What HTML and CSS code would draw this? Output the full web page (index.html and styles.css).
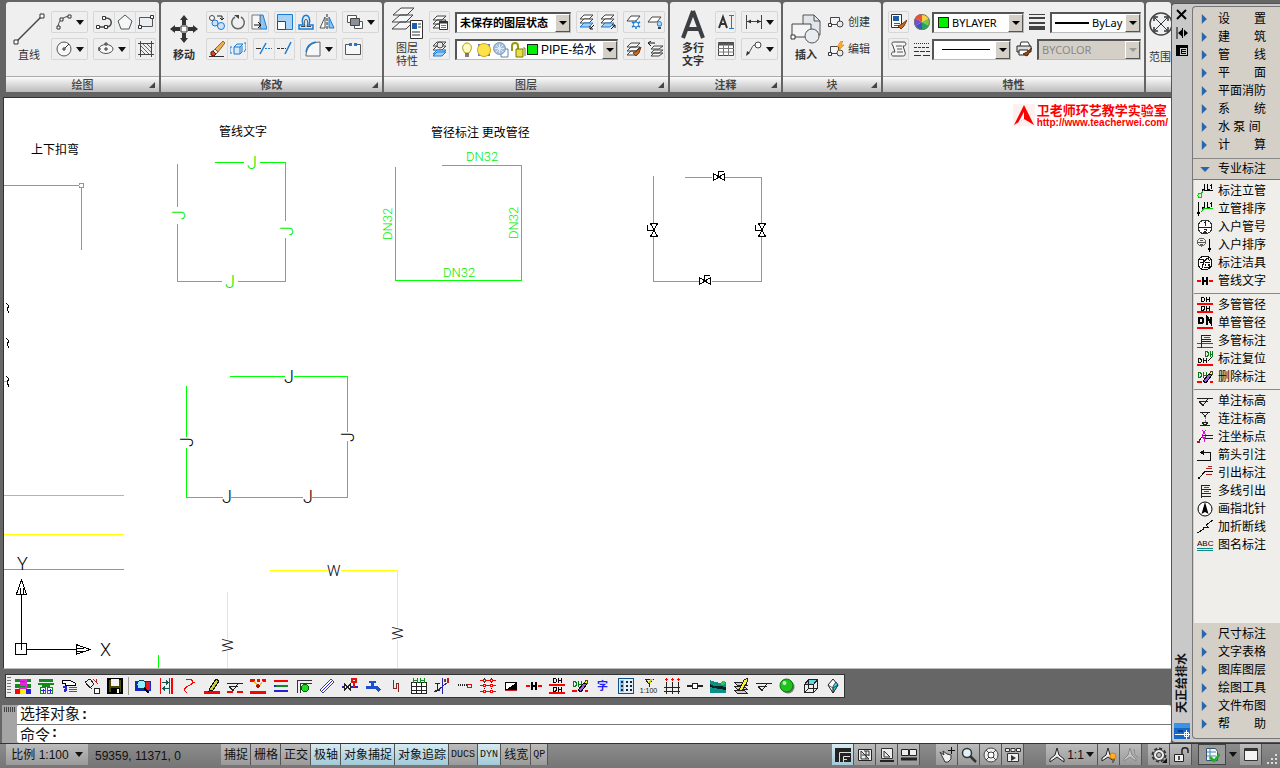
FILE: index.html
```html
<!DOCTYPE html>
<html lang="zh-CN">
<head>
    <meta charset="UTF-8">
    <title>天正给排水</title>
    <link rel="stylesheet" href="styles.css">
</head>
<body>
    <!-- Shared icons -->
    <svg class="symbols" aria-hidden="true">
        <symbol id="layers" viewBox="0 0 16 16"><path d="M5 2h9l-4 4H1zM5 6h9l-4 4H1zM5 10h9l-4 4H1z" fill="#f4f6f8" stroke="#444"/></symbol>
        <symbol id="layers-blue" viewBox="0 0 16 16"><path d="M5 1h9l-4 4H1z" fill="#fff" stroke="#444"/><path d="M5 5h9l-4 4H1z" fill="#fff" stroke="#444"/><path d="M5 9h9l-4 4H1z" fill="#9fd0f5" stroke="#1c7bd0"/></symbol>
        <symbol id="dn-pair" viewBox="0 0 16 16"><path d="M0 7h16M0 15h16" stroke="red" stroke-width="2"/><path d="M4.500 0v5M4.500.5h2l1 1v2l-1 1h-2M9.500 0v5M12.500 0v5M9.500 2.500h3M4.500 8.500v5M4.500 9h2l1 1v2l-1 1h-2M9.500 8.500v5M12.500 8.500v5M9.500 11h3" fill="none" stroke="#000"/></symbol>
        <symbol id="h-line" viewBox="0 0 16 16"><path d="M0 8h4M12 8h4" stroke="red" stroke-width="2"/><path d="M6 4v8M10 4v8M6 8h4" stroke="#000" stroke-width="1.5"/></symbol>
        <symbol id="dn-erase" viewBox="0 0 16 16"><path d="M0 13h5M13 13h3" stroke="red" stroke-width="2"/><path d="M1.500 3v6M1.500 3.500h2l1 2v1l-1 2h-2M6.500 3v6M9.500 3v4M6.500 6h3" fill="none" stroke="#0a7a1a"/><path d="M6 12l6-7 3 1-6 8z" fill="#a060d8" stroke="#000"/><path d="M12 5l2-3 2 1-1 3z" fill="#ff0" stroke="#000" stroke-width=".7"/></symbol>
        <symbol id="level" viewBox="0 0 16 16"><path d="M0 5.500h16M2 8.500h9M2 8.500l4 4 5-7" fill="none" stroke="#222"/></symbol>
        <symbol id="jl" viewBox="0 0 16 16"><path d="M7.500 1v5H5M10.500 1v5h2M13 3l1.500-1.500V6M5 7.500h11" fill="none" stroke="#000"/></symbol>
    </svg>

    <div class="app">
        <div class="workspace">
            <main class="main">
                <!-- Ribbon -->
                <div class="ribbon">
                    <section class="panel">
                        <div class="panel-body">
                            <button class="big"><svg class="icon32" viewBox="0 0 32 32"><path d="M4 28L28 4" stroke="#444" stroke-width="1.5"/><path d="M1 27h4v4H1zM27 1h4v4h-4z" fill="#fff" stroke="#333"/></svg><span>直线</span></button>
                            <div class="rows">
                                <div class="row">
                                    <span class="group"><button class="tool split" aria-label="圆弧"><svg viewBox="0 0 16 16"><path d="M2 14C2 7 6 3 14 2" fill="none" stroke="#444"/><path d="M1 12h3v3H1zM4 4h3v3H4zM12 1h3v3h-3z" fill="#fff" stroke="#333"/></svg><i class="caret"></i></button></span>
                                    <span class="group">
                                        <button class="tool" aria-label="多段线"><svg viewBox="0 0 16 16"><path d="M2 13h8c7 0 7-9 0-9H8" fill="none" stroke="#444" stroke-width="1.500"/><path d="M.5 11.500h3v3h-3zM8.500 11.500h3v3h-3zM6.500 2.500h3v3h-3z" fill="#fff" stroke="#333"/></svg></button>
                                        <button class="tool" aria-label="多边形"><svg viewBox="0 0 16 16"><path d="M8 1l7 6-3 8H4L1 7z" fill="#f5f7f9" stroke="#555"/></svg></button>
                                        <button class="tool" aria-label="矩形"><svg viewBox="0 0 16 16"><path d="M1.500 3.500h13v9h-13z" fill="#e9eef2" stroke="#555"/><path d="M.5 11.500h3v3h-3zM12.500 1.500h3v3h-3z" fill="#fff" stroke="#333"/></svg></button>
                                    </span>
                                </div>
                                <div class="row">
                                    <span class="group"><button class="tool split" aria-label="圆"><svg viewBox="0 0 16 16"><circle cx="8" cy="8" r="7" fill="#f5f7f9" stroke="#555"/><path d="M8 8l5-5" stroke="#333"/><path d="M7 7h2v2H7z" fill="#fff" stroke="#333"/></svg><i class="caret"></i></button></span>
                                    <span class="group"><button class="tool split" aria-label="椭圆"><svg viewBox="0 0 16 16"><ellipse cx="8" cy="8" rx="7" ry="4.5" fill="#f5f7f9" stroke="#555"/><path d="M0 7h2v2H0zM7 7h2v2H7zM7 2h2v2H7z" fill="#fff" stroke="#333"/></svg><i class="caret"></i></button></span>
                                    <span class="group"><button class="tool" aria-label="图案填充"><svg viewBox="0 0 16 16"><path d="M0 2.500h16M0 13.500h16M2.500 0v16M13.500 0v16" stroke="#444"/><path d="M3 5l8 8M3 9l4 4M5 3l8 8M9 3l4 4" stroke="#666"/></svg></button></span>
                                </div>
                            </div>
                        </div>
                        <h2 class="panel-title">绘图<i class="corner"></i></h2>
                    </section>

                    <section class="panel">
                        <div class="panel-body">
                            <button class="big"><svg class="icon32" viewBox="0 0 32 32"><path d="M16 2l4 5h-2v5h-4V7h-2zM16 30l4-5h-2v-5h-4v5h-2zM2 16l5-4v2h5v4H7v2zM30 16l-5-4v2h-5v4h5v2z" fill="#333"/><path d="M13 13h6v6h-6z" fill="#fff" stroke="#333"/></svg><span><b>移动</b></span></button>
                            <div class="rows">
                                <div class="row">
                                    <span class="group">
                                        <button class="tool" aria-label="复制"><svg viewBox="0 0 16 16"><circle cx="3" cy="4" r="2.5" fill="#fff" stroke="#444"/><circle cx="6" cy="9" r="3" fill="#cbe4f8" stroke="#1c7bd0"/><circle cx="12" cy="12" r="3.5" fill="#cbe4f8" stroke="#1c7bd0"/><path d="M8 2h5v4M11 4l2 2 2-2" fill="none" stroke="#222"/></svg></button>
                                        <button class="tool" aria-label="旋转"><svg viewBox="0 0 16 16"><path d="M5 3a6.3 6.3 0 1 0 6 0" fill="none" stroke="#666" stroke-width="1.500"/><path d="M4 1h5v4z" fill="#444"/></svg></button>
                                        <button class="tool" aria-label="拉伸"><svg viewBox="0 0 16 16"><path d="M9 1h3l4 14H9z" fill="#8fc4f0" stroke="#1c7bd0"/><path d="M1 1h8v14H1z" fill="#f6f6f6" stroke="#777"/><path d="M3 11h7M7 8l3 3-3 3" stroke="#111" fill="none"/></svg></button>
                                    </span>
                                    <span class="group">
                                        <button class="tool" aria-label="缩放"><svg viewBox="0 0 16 16"><path d="M.5.500h15v15H.5z" fill="#a9d3f5" stroke="#1c7bd0"/><path d="M.5 7.500h8v8h-8z" fill="#fff" stroke="#444"/></svg></button>
                                        <button class="tool" aria-label="偏移"><svg viewBox="0 0 16 16"><path d="M1 15v-4h4C1 -2 15 -2 11 11h4v4z" fill="#d4e9fa" stroke="#1c7bd0" stroke-width="1.5"/><path d="M3 12.500h4C4 3 12 3 9 12.500h4" fill="none" stroke="#444"/></svg></button>
                                        <button class="tool" aria-label="镜像"><svg viewBox="0 0 16 16"><path d="M6 3v11H1z" fill="#fff" stroke="#555"/><path d="M10 3v11h5z" fill="#8fc4f0" stroke="#1c7bd0"/><path d="M8 0v16" stroke="#222" stroke-dasharray="3 1"/></svg></button>
                                    </span>
                                    <span class="group"><button class="tool split" aria-label="阵列"><svg viewBox="0 0 16 16"><path d="M.5 1.500h9v7h-9z" fill="#fff" stroke="#555"/><path d="M7.500 7.500h8v7h-8z" fill="#fff" stroke="#555"/><path d="M3.500 4.500h9v7h-9z" fill="#8b9197" stroke="#444"/></svg><i class="caret"></i></button></span>
                                </div>
                                <div class="row">
                                    <span class="group">
                                        <button class="tool" aria-label="删除"><svg viewBox="0 0 16 16"><path d="M6 8l8-8 2 2-7 9z" fill="#f0b050" stroke="#6b3a0a" stroke-width=".7"/><path d="M6 8l3 3-2 2-3-3z" fill="#eee" stroke="#333" stroke-width=".7"/><path d="M2 11l2-1 3 3-2 2-3-1z" fill="#d9481c" stroke="#5a1a0a"/><path d="M0 15.5h15" stroke="#333"/></svg></button>
                                        <button class="tool" aria-label="分解"><svg viewBox="0 0 16 16"><path d="M4 6h6v7H4zM4 6l3-3h6l-3 3M10 13l2-2V5" fill="#d4e9fa" stroke="#1c7bd0"/><path d="M2 6H0v6h2M14 2h2v6l-2 3" fill="none" stroke="#1c7bd0"/></svg></button>
                                    </span>
                                    <span class="group">
                                        <button class="tool" aria-label="修剪"><svg viewBox="0 0 16 16"><path d="M0 7.500h5" stroke="#333"/><path d="M9 7.500h7" stroke="#1c7bd0" stroke-dasharray="2 1"/><path d="M4 13L10 2" stroke="#1c7bd0" stroke-width="1.5"/></svg></button>
                                        <button class="tool" aria-label="延伸"><svg viewBox="0 0 16 16"><path d="M0 7.500h9" stroke="#333" stroke-dasharray="3 1"/><path d="M8 13l6-12" stroke="#1c7bd0" stroke-width="1.5"/></svg></button>
                                    </span>
                                    <span class="group"><button class="tool split" aria-label="圆角"><svg viewBox="0 0 16 16"><path d="M1 15C1 7 6 1 15 1v14z" fill="#f5f7f9" stroke="#666"/><path d="M1 11C2 5 5 2 11 1" fill="none" stroke="#1c7bd0" stroke-width="1.5"/></svg><i class="caret"></i></button></span>
                                    <span class="group"><button class="tool" aria-label="打断"><svg viewBox="0 0 16 16"><path d="M5 3.500H.5v10h15v-10H11" fill="#f5f7f9" stroke="#555"/><path d="M4 2h3v3H4zM9 2h3v3H9z" fill="#1c7bd0"/></svg></button></span>
                                </div>
                            </div>
                        </div>
                        <h2 class="panel-title"><b>修改</b><i class="corner"></i></h2>
                    </section>

                    <section class="panel">
                        <div class="panel-body">
                            <button class="big tall"><svg class="icon32" viewBox="0 0 32 32"><path d="M10 1h13l-7 7H2zM9 8h13l-7 7H1zM9 15h13l-7 7H1z" fill="#f4f6f8" stroke="#444"/><path d="M19.500 13.500h12v18h-12z" fill="#fff" stroke="#333"/><path d="M21 16h5v6h-5z" fill="#1c5fa8"/><path d="M27 17h3M27 20h3M21 25h8M21 28h8" stroke="#333"/></svg><span>图层<br>特性</span></button>
                            <div class="rows">
                                <div class="row">
                                    <span class="group"><button class="tool" aria-label="图层状态"><svg viewBox="0 0 16 16"><use href="#layers"/><path d="M7.500 7.500h8v8h-8z" fill="#fff" stroke="#333"/><path d="M7 8.500h9" stroke="#333" stroke-width="2"/><path d="M9 11.500h5M9 13.500h5" stroke="#777"/></svg></button></span>
                                    <span class="combo combo-state"><select aria-label="图层状态"><option>未保存的图层状态</option></select><i class="drop"></i></span>
                                    <span class="group">
                                        <button class="tool" aria-label="隔离"><svg viewBox="0 0 16 16"><use href="#layers-blue"/><path d="M15 11l-4 4M11 12v3h3" fill="none" stroke="#111"/></svg></button>
                                        <button class="tool" aria-label="取消隔离"><svg viewBox="0 0 16 16"><use href="#layers-blue"/><path d="M11 15l4-4M12 11h3v3" fill="none" stroke="#111"/></svg></button>
                                    </span>
                                    <span class="group">
                                        <button class="tool" aria-label="冻结"><svg viewBox="0 0 16 16"><path d="M5 2h9l-4 5H1z" fill="#fff" stroke="#444"/><path d="M10 6v9M6 8l8 5M14 8l-8 5" stroke="#1c7bd0" stroke-width="1.5"/><circle cx="10" cy="10.5" r="2.5" fill="#fff" stroke="#1c7bd0"/></svg></button>
                                        <button class="tool" aria-label="关闭"><svg viewBox="0 0 16 16"><path d="M5 3h9l-4 5H1z" fill="#fff" stroke="#444"/><path d="M11 12c-3-6 6-6 3 0z" fill="#a9d3f5" stroke="#1c7bd0"/><path d="M11 14h3" stroke="#444" stroke-width="2"/></svg></button>
                                    </span>
                                </div>
                                <div class="row">
                                    <span class="group"><button class="tool" aria-label="置为当前"><svg viewBox="0 0 16 16"><use href="#layers-blue"/><path d="M5 11h9l-4 4H1z" fill="#9fd0f5" stroke="#1c7bd0"/><circle cx="8" cy="4" r="3" fill="#e8e8e8" stroke="#444"/></svg></button></span>
                                    <span class="combo combo-layer">
                                        <svg viewBox="0 0 16 16"><path d="M6 11C1 5 5 1 8 1s7 4 2 10z" fill="#fffcc0" stroke="#b59b10"/><path d="M6 12h4M6 14h4" stroke="#555" stroke-width="1.5"/></svg>
                                        <svg viewBox="0 0 16 16"><path d="M2 2h12v12H2z" fill="#4f8be0"/><circle cx="8" cy="8" r="6.500" fill="#ffe34a" stroke="#d9a70c"/></svg>
                                        <svg viewBox="0 0 16 16"><path d="M8 7h7v8H8z" fill="#fff" stroke="#5f83ad"/><circle cx="6.500" cy="6.500" r="6" fill="#a7bed8" stroke="#7d9cc0"/><path d="M6.500 2v9M2 6.500h9M3 3l7 7M10 3l-7 7" stroke="#dfe9f3"/></svg>
                                        <svg viewBox="0 0 16 16"><path d="M2 9V4c0-4 6-4 6 0v4" fill="none" stroke="#9a9a10" stroke-width="2"/><path d="M6 7h7v8H6z" fill="#e6e040" stroke="#77770a"/><path d="M13 6h2v8" fill="none" stroke="#77770a"/></svg>
                                        <i class="swatch"></i>
                                        <select aria-label="图层"><option>PIPE-给水</option></select><i class="drop"></i>
                                    </span>
                                    <span class="group">
                                        <button class="tool" aria-label="匹配图层"><svg viewBox="0 0 16 16"><use href="#layers"/><path d="M7 12l4-2 4-4-2 6-3 3z" fill="#c96a1e" stroke="#7a3608"/></svg></button>
                                        <button class="tool" aria-label="上一个图层"><svg viewBox="0 0 16 16"><path d="M7 5h9l-4 3H4zM7 9h9l-4 3H4zM7 12h9l-4 3H4z" fill="#f4f6f8" stroke="#444"/><path d="M8 2H2M4 0L1 2l3 3" fill="none" stroke="#111"/></svg></button>
                                    </span>
                                </div>
                            </div>
                        </div>
                        <h2 class="panel-title">图层<i class="corner"></i></h2>
                    </section>

                    <section class="panel">
                        <div class="panel-body">
                            <button class="big tall"><svg class="icon32" viewBox="0 0 32 32"><path d="M16 4l10 27M16 4L6 31M9 22h14" fill="none" stroke="#3c3f42" stroke-width="4"/></svg><span><b>多行<br>文字</b></span></button>
                            <div class="rows">
                                <div class="row">
                                    <span class="group"><button class="tool" aria-label="文字编辑"><svg viewBox="0 0 16 16"><path d="M1 14L5 3l4 11M2 10h6" fill="none" stroke="#333" stroke-width="2"/><path d="M11 1.500h5M13.500 1v14M11 14.500h5" stroke="#1c7bd0"/></svg></button></span>
                                    <span class="group"><button class="tool split" aria-label="标注"><svg viewBox="0 0 16 16"><path d="M.5 1v14M15.500 1v14M1 7.500h14" stroke="#444"/><path d="M1 7.500l4-2v4zM15 7.500l-4-2v4z" fill="#333"/></svg><i class="caret"></i></button></span>
                                </div>
                                <div class="row">
                                    <span class="group"><button class="tool" aria-label="表格"><svg viewBox="0 0 16 16"><path d="M.5 1.500h15v13H.5z" fill="#fff" stroke="#444"/><path d="M0 3h16" stroke="#555" stroke-width="3"/><path d="M0 7.500h16M0 11h16M5.500 3v12M10.500 3v12" stroke="#777"/></svg></button></span>
                                    <span class="group"><button class="tool split" aria-label="引线"><svg viewBox="0 0 16 16"><circle cx="12" cy="4" r="3" fill="#fff" stroke="#444"/><path d="M9 4C6 4 6 8 2 13" fill="none" stroke="#444"/><path d="M0 15l1-5 3 2z" fill="#333"/></svg><i class="caret"></i></button></span>
                                </div>
                            </div>
                        </div>
                        <h2 class="panel-title"><b>注释</b><i class="corner"></i></h2>
                    </section>

                    <section class="panel">
                        <div class="panel-body">
                            <button class="big"><svg class="icon32" viewBox="0 0 32 32"><path d="M13 2h11l6 6v14H13z" fill="#e2e6ea" stroke="#555"/><path d="M24 2v6h6" fill="none" stroke="#555"/><path d="M2 11h19v13H2z" fill="#f2f4f6" stroke="#444"/><circle cx="22" cy="23" r="7" fill="#e8ecf0" stroke="#555"/><path d="M1 22h4v4H1z" fill="#fff" stroke="#333"/></svg><span><b>插入</b></span></button>
                            <div class="rows">
                                <div class="row"><button class="text-tool"><svg viewBox="0 0 16 16"><path d="M2.500 3.500h9v7h-9z" fill="#f2f4f6" stroke="#444"/><circle cx="12" cy="10" r="3" fill="#e8ecf0" stroke="#444"/><path d="M.5 9.500h3v3h-3z" fill="#fff" stroke="#333"/></svg>创建</button></div>
                                <div class="row"><button class="text-tool"><svg viewBox="0 0 16 16"><path d="M2.500 5.500h8v7h-8z" fill="#f2f4f6" stroke="#444"/><circle cx="12" cy="12" r="3" fill="#e8ecf0" stroke="#444"/><path d="M.5 11.500h3v3h-3z" fill="#fff" stroke="#333"/><path d="M13 0L9 6h3l-2 4 6-6h-3l2-4z" fill="#ffb02e" stroke="#c56a00" stroke-width=".5"/></svg>编辑</button></div>
                            </div>
                        </div>
                        <h2 class="panel-title">块<i class="corner"></i></h2>
                    </section>

                    <section class="panel">
                        <div class="panel-body">
                            <div class="rows">
                                <div class="row">
                                    <span class="group"><button class="tool" aria-label="特性匹配"><svg viewBox="0 0 16 16"><path d="M.5.500h10v13H.5z" fill="#fff" stroke="#333"/><path d="M2 2h6v5H2z" fill="#1c5fa8"/><path d="M3 9.500h6M3 11.500h6" stroke="#555"/><path d="M7 12l4-2 5-4-3 6-3 3z" fill="#c96a1e" stroke="#7a3608"/></svg></button></span>
                                    <svg class="label-icon" viewBox="0 0 16 16"><path d="M8 8V0a8 8 0 0 1 7 4z" fill="#ffd23c"/><path d="M8 8l7-4a8 8 0 0 1 0 8z" fill="#7ac943"/><path d="M8 8l7 4a8 8 0 0 1-7 4z" fill="#27a35a"/><path d="M8 8v8a8 8 0 0 1-7-4z" fill="#3458c8"/><path d="M8 8l-7 4a8 8 0 0 1 0-8z" fill="#7b4bd0"/><path d="M8 8L1 4a8 8 0 0 1 7-4z" fill="#ee5030"/><circle cx="8" cy="8" r="7.500" fill="none" stroke="#777"/></svg>
                                    <span class="combo combo-color"><i class="swatch"></i><select aria-label="颜色"><option>BYLAYER</option></select><i class="drop"></i></span>
                                    <svg class="label-icon" viewBox="0 0 16 16"><path d="M0 .5h16" stroke="#444"/><path d="M0 4h16M0 9h16" stroke="#444" stroke-width="2"/><path d="M0 14h16" stroke="#444" stroke-width="4"/></svg>
                                    <span class="combo combo-weight"><i class="stroke"></i><select aria-label="线宽"><option>ByLay</option></select><i class="drop"></i></span>
                                </div>
                                <div class="row">
                                    <span class="group"><button class="tool" aria-label="列表"><svg viewBox="0 0 16 16"><path d="M3 1h10c3 0 2 4 0 4h-1l2 6c1 4-1 4-3 4H2c-2 0-2-4 0-4h2L2 5C0 2 1 1 3 1z" fill="#f5f5f5" stroke="#444"/><path d="M5 5h6M6 8h5M6 11h6" stroke="#555"/></svg></button></span>
                                    <svg class="label-icon" viewBox="0 0 16 16"><path d="M0 2.500h16" stroke="#333" stroke-dasharray="1 1"/><path d="M0 6.500h16" stroke="#333" stroke-dasharray="3 1"/><path d="M0 10.500h16" stroke="#333" stroke-dasharray="5 1"/><path d="M0 14.500h16" stroke="#333" stroke-dasharray="7 2"/></svg>
                                    <span class="combo combo-type"><i class="stroke"></i><select aria-label="线型"><option></option></select><i class="drop"></i></span>
                                    <svg class="label-icon" viewBox="0 0 16 16"><path d="M4 5l1-4h7l2 4" fill="#fff" stroke="#333"/><path d="M1 5h14v6H1z" fill="#ddd" stroke="#222"/><path d="M3 9h9v5H3z" fill="#fff" stroke="#222"/><path d="M7 13l4-2 5-4-3 5-2 3z" fill="#9c4518" stroke="#5a2608"/></svg>
                                    <span class="combo combo-plot disabled"><select aria-label="打印样式" disabled><option>BYCOLOR</option></select><i class="drop"></i></span>
                                </div>
                            </div>
                        </div>
                        <h2 class="panel-title"><b>特性</b></h2>
                    </section>

                    <section class="panel panel-last">
                        <div class="panel-body">
                            <button class="big zoom-big"><svg class="icon24" viewBox="0 0 24 24"><circle cx="12" cy="12" r="11" fill="#eef0f2" stroke="#444" stroke-width="1.500"/><path d="M6 6l12 12M18 6L6 18" stroke="#333"/><path d="M5 9V5h4M15 5h4v4M19 15v4h-4M9 19H5v-4" fill="none" stroke="#333" stroke-width="1.500"/></svg><span>范围</span></button>
                        </div>
                        <h2 class="panel-title"></h2>
                    </section>
                </div>

                <!-- Drawing area -->
                <div class="drawing">
                    <svg class="canvas" aria-label="绘图区">
                        <g transform="translate(-4 -98)" shape-rendering="crispEdges">
                            <g class="pipe water">
                                <path d="M4 185.500h75M81.500 188v62"/>
                                <circle cx="81.500" cy="185.500" r="2.500"/>
                                <path d="M177.500 164v43M177.500 224v57.500h44M238 281.500h47.500V238M285.500 221v-58.500H260M244 162.500h-29"/>
                                <path d="M395.500 167v113.500h126V165.500H442"/>
                                <path d="M653.500 176v47M653.500 236v45.500h45M712 281.500h49.500V236M761.500 223v-45.500H725M712 177.500h-27"/>
                                <path d="M186.500 386v51M186.500 448v49.500h36M231 497.500h72M312 497.500h35.500V441M347.500 432v-55.500H294M285 376.500h-55"/>
                                <path d="M4 569.500h120M158.500 655v13"/>
                            </g>
                            <path class="pipe cool" d="M4 495.500h120M4 381.500h4"/>
                            <path class="pipe waste" d="M4 534.500h120M270 570.500h57M341 570.500h56.500V627M397.500 640v28M227.500 592v47M227.500 651v17"/>

                            <!-- valves -->
                            <g class="ink">
                                <g id="valve" transform="translate(719 177)"><path d="M-5.500-3.500v7l11-7v7zM-.5 0v-5.500h5"/></g>
                                <use href="#valve" x="-14" y="104"/>
                                <g id="valve-v" transform="translate(654 230)"><path d="M-3.500-6.500h7l-7 13h7zM0 0h-6.500v-5"/></g>
                                <use href="#valve-v" x="108"/>
                                <path d="M6 303l3 3-2 3 2 4M6 338l3 3-2 3 2 4M6 376l3 3-2 3 2 5"/>
                                <path d="M21.500 594v56M15.500 643.500h11v11h-11zM27 649.500h50M21.500 580l5 14h-10zM20 588v6M23 588v6M90 649.500l-14-5v10zM76 648h8M76 651h8"/>
                            </g>
                        </g>

                        <g transform="translate(-4 -98)">
                            <g class="note">
                                <text x="31" y="154">上下扣弯</text>
                                <text x="219" y="136">管线文字</text>
                                <text x="431" y="137">管径标注 更改管径</text>
                            </g>
                            <g class="size green">
                                <text x="466" y="161">DN32</text>
                                <text x="443" y="277">DN32</text>
                                <text transform="translate(392 240) rotate(-90)">DN32</text>
                                <text transform="translate(518 239) rotate(-90)">DN32</text>
                            </g>
                            <g class="tag green">
                                <text x="247" y="169">J</text>
                                <text x="225" y="288">J</text>
                                <text transform="translate(185 220) rotate(-90)">J</text>
                                <text transform="translate(293 236) rotate(-90)">J</text>
                            </g>
                            <g class="tag">
                                <text x="284" y="383">J</text>
                                <text x="222" y="503">J</text>
                                <text x="303" y="503">J</text>
                                <text transform="translate(193 447) rotate(-90)">J</text>
                                <text transform="translate(354 442) rotate(-90)">J</text>
                                <text x="17" y="570">Y</text>
                                <text x="100" y="656">X</text>
                            </g>
                            <g class="waste-tag">
                                <text x="327" y="576">W</text>
                                <text transform="translate(233 652) rotate(-90)">W</text>
                                <text transform="translate(403 640) rotate(-90)">W</text>
                            </g>
                        </g>
                    </svg>
                    <div class="brand">
                        <svg viewBox="0 0 22 22"><path d="M0 0h22v22H0z" fill="#fff0f0"/><path d="M11 1l10 20-10-6-10 6z" fill="red"/><path d="M11 8v7l-6 4z" fill="#fff"/></svg>
                        <div><strong>卫老师环艺教学实验室</strong><a href="#">http://www.teacherwei.com/</a></div>
                    </div>
                </div>

                <!-- Drafting toolbar -->
                <div class="toolbar">
                    <i class="grip"></i>
                    <button aria-label="初始设置"><svg viewBox="0 0 16 16"><path d="M0 1h16v3H0zM0 6h16v4H0z" fill="#138a1c"/><path d="M5 2h6v3H6v2h5v3H4" fill="none" stroke="#e028d8" stroke-width="2"/><path d="M0 11h5v5H0z" fill="red"/><path d="M5 11h6v5H5z" fill="#fe0"/><path d="M11 11h5v5h-5z" fill="#22d"/></svg></button>
                    <button aria-label="工程管理"><svg viewBox="0 0 16 16"><path d="M1 1h14v3H1zM0 5h16v2H0zM4 7h8v2H4z" fill="#138a1c"/><path d="M2.500 9.500h5v6h-5zM9.500 9.500h5v6h-5z" fill="#fff" stroke="#138a1c"/><path d="M3 12.500h4M5 11v4M10 12.500h4M12 11v4" stroke="#22d"/></svg></button>
                    <button aria-label="图纸查询"><svg viewBox="0 0 16 16"><path d="M1.500 2.500h8l5 3v2h-10v-2h-3z" fill="#fff" stroke="#000"/><path d="M8 9.500h8M8 11.500h8M8 13.500h8" stroke="#138a1c"/><path d="M2 9h3v3H4v2" fill="none" stroke="#22d" stroke-width="1.500"/></svg></button>
                    <button aria-label="转换"><svg viewBox="0 0 16 16"><path d="M1 4l5-3 4 5-4 4zM3 6l5 5" fill="none" stroke="#222"/><path d="M10.500 10.500h5v5h-5z" fill="#fff" stroke="#222"/><path d="M9 1l5 5M12 1v4" stroke="#a22"/></svg></button>
                    <button aria-label="保存"><svg viewBox="0 0 16 16"><path d="M1 1h14v14H1z" fill="#4a4a00" stroke="#000" stroke-width="2"/><path d="M4 1h8v7H4z" fill="#f4f4f4"/><path d="M4 10h9v5H4z" fill="#000"/><path d="M10 11h2v4h-2z" fill="#fff"/></svg></button>
                    <i class="divider"></i>
                    <button aria-label="查找"><svg viewBox="0 0 16 16"><path d="M0 3h16v10H0z" fill="#1525c8"/><path d="M11 4h4v8h-4z" fill="#e02020"/><path d="M9 10l5 5" stroke="#000" stroke-width="2"/><circle cx="6.500" cy="6.500" r="4.500" fill="#90f0ff" stroke="#045"/></svg></button>
                    <button aria-label="交换"><svg viewBox="0 0 16 16"><path d="M2.500 0v16M11.500 0v16" stroke="red"/><path d="M14 0v16" stroke="red" stroke-width="2"/><path d="M4 4.500h6M8 2.500l2 2-2 2M11 10.500H5M7 8.500l-2 2 2 2" fill="none" stroke="#155"/></svg></button>
                    <button aria-label="曲线"><svg viewBox="0 0 16 16"><path d="M5 1c7 0 9 3 4 6-6 3-8 4-3 8M3 11l3-2M10 6l4-2" fill="none" stroke="red"/></svg></button>
                    <button aria-label="画管线"><svg viewBox="0 0 16 16"><path d="M0 14h16" stroke="red" stroke-width="3"/><path d="M6 10l6-9 3 2-6 9-4 1z" fill="#cc4" stroke="#111"/></svg></button>
                    <button aria-label="标高"><svg viewBox="0 0 16 16"><use href="#level"/><path d="M0 14h6M10 14h6" stroke="red" stroke-width="2"/></svg></button>
                    <button aria-label="断管"><svg viewBox="0 0 16 16"><path d="M0 2h5M7 2h3M12 2h4M0 14h16" stroke="red" stroke-width="3"/><path d="M4 3l3 4h3l3-4" stroke="#fb0" fill="none"/><path d="M8 6v4M6 8h4" stroke="#a11" stroke-width="2"/></svg></button>
                    <button aria-label="多管"><svg viewBox="0 0 16 16"><path d="M3 3h12" stroke="red" stroke-width="2"/><path d="M3 8h12" stroke="#118a22" stroke-width="2"/><path d="M3 13h12" stroke="#22d" stroke-width="2"/><circle cx="2" cy="3" r="1.500" fill="red"/><circle cx="2" cy="8" r="1.500" fill="#22d"/><circle cx="2" cy="13" r="1.500" fill="#22d"/></svg></button>
                    <button aria-label="立管"><svg viewBox="0 0 16 16"><path d="M1.500 15V2.500H16M4.500 15V5.500H16" fill="none" stroke="#333"/><circle cx="9" cy="10" r="3.500" fill="#16e016" stroke="#086008"/></svg></button>
                    <button aria-label="管道"><svg viewBox="0 0 16 16"><path d="M1 12L12 1l3 3L4 15z" fill="#fff" stroke="#445"/><path d="M3 13L13 3" stroke="#22d"/></svg></button>
                    <button aria-label="阀门"><svg viewBox="0 0 16 16"><path d="M0 9h2M9 9h7" stroke="#22d" stroke-width="2"/><path d="M2.500 6v6l6-6v6z" fill="#fff" stroke="#222"/><path d="M12 9V4M9 4h6M10 1h4v3h-4z" fill="none" stroke="#d11" stroke-width="1.500"/></svg></button>
                    <button aria-label="水龙头"><svg viewBox="0 0 16 16"><path d="M1 9h10l4 4M7 9V4" fill="none" stroke="#1b4fd0" stroke-width="3"/><path d="M4 4h7" stroke="#1b4fd0" stroke-width="2"/></svg></button>
                    <button aria-label="断线"><svg viewBox="0 0 16 16"><path d="M5.500 2v8h3V5h2v9" fill="none" stroke="#822"/></svg></button>
                    <button aria-label="材料表"><svg viewBox="0 0 16 16"><path d="M.5 4.500h15v11H.5zM0 8.500h16M0 12.500h16M5.500 4v12M10.500 4v12" fill="#fff" stroke="#222"/><path d="M2 0v5M6 0v5M9 0v5M13 0v5M2 2h4M9 2h4" stroke="#138a1c"/></svg></button>
                    <button aria-label="系统图"><svg viewBox="0 0 16 16"><path d="M8.500 0v16M0 13h3l6-5 5-4" fill="none" stroke="#22a"/><path d="M1 5.500h5M3.500 5v7M1 12.500h5" stroke="#222"/><path d="M11 4V1M14 5V0" stroke="#a22" stroke-width="2"/></svg></button>
                    <button aria-label="喷头"><svg viewBox="0 0 16 16"><path d="M1 7h9" stroke="#222" stroke-dasharray="1 1" stroke-width="2"/><circle cx="12.500" cy="8" r="2" fill="#fff" stroke="red"/></svg></button>
                    <button aria-label="喷淋"><svg viewBox="0 0 16 16"><path d="M0 2.500h16M0 7.500h16M0 13.500h16" stroke="red"/><path d="M4.500 0v16M11.500 0v16" stroke="#222" stroke-dasharray="1 1"/><g fill="#fff" stroke="red"><circle cx="4.500" cy="2.500" r="1.500"/><circle cx="11.500" cy="2.500" r="1.500"/><circle cx="4.500" cy="7.500" r="1.500"/><circle cx="11.500" cy="7.500" r="1.500"/><circle cx="4.500" cy="13.500" r="1.500"/><circle cx="11.500" cy="13.500" r="1.500"/></g></svg></button>
                    <button aria-label="消火栓"><svg viewBox="0 0 16 16"><path d="M2.500 4.500h11v7h-11z" fill="#fff" stroke="#000"/><path d="M13 5v6H4z" fill="#000"/><path d="M2 12.500h12" stroke="#c22"/></svg></button>
                    <button aria-label="管线文字"><svg viewBox="0 0 16 16"><use href="#h-line"/></svg></button>
                    <button aria-label="多管管径"><svg viewBox="0 0 16 16"><use href="#dn-pair"/></svg></button>
                    <button aria-label="删除标注"><svg viewBox="0 0 16 16"><use href="#dn-erase"/></svg></button>
                    <button class="word">字</button>
                    <button aria-label="计算器"><svg viewBox="0 0 16 16"><path d="M.5.5h15v15H.5z" fill="#dff0fa" stroke="#11518a"/><path d="M2 2h4v12H2z" fill="#8cc4e8"/><path d="M8 4h6M8 8h6M8 12h6M3 4h2M3 8h2M3 12h2" stroke="#223" stroke-dasharray="2 2" stroke-width="2"/></svg></button>
                    <button class="scale-tool" aria-label="比例"><svg viewBox="0 0 16 9"><path d="M4 1l4 5v3M8 6l4-5M5 1h8" fill="none" stroke="#222"/><path d="M8 5l3-4" stroke="#cc0" stroke-width="2"/></svg><span>1:100</span></button>
                    <button aria-label="轴网"><svg viewBox="0 0 16 16"><path d="M2.500 4v12M8.500 4v12M14.500 4v12M0 13.500h16M0 9.500h16" stroke="#222"/><path d="M2.500 0v3M8.500 0v3M14.500 0v3M1 1.500h3M7 1.500h3M13 1.500h3" stroke="red"/></svg></button>
                    <button aria-label="节点"><svg viewBox="0 0 16 16"><path d="M0 8h5M11 8h5" stroke="#222" stroke-width="2"/><circle cx="8" cy="8" r="3" fill="#fff" stroke="#222"/></svg></button>
                    <button aria-label="渲染"><svg viewBox="0 0 16 16"><path d="M0 2l5 2 5 1 6-1v11H0z" fill="#0a8f8b"/><path d="M0 6l4 2h6l6 1v3l-7-1-5-1-4-1z" fill="#05261f"/><circle cx="13" cy="5" r="2" fill="#2ad040"/></svg></button>
                    <button aria-label="编辑图层"><svg viewBox="0 0 16 16"><path d="M1 4h10l3 3H4zM1 8h10l3 3H4zM1 12h10l3 3H4z" fill="#ccc" stroke="#222"/><path d="M6 12l5-10 4-2-1 4-5 9z" fill="#fe3" stroke="#222"/></svg></button>
                    <button aria-label="单注标高"><svg viewBox="0 0 16 16"><use href="#level"/></svg></button>
                    <button class="smooth" aria-label="运行"><svg viewBox="0 0 16 16"><circle cx="9" cy="9" r="6.500" fill="#777"/><circle cx="7.500" cy="7.500" r="6.500" fill="#1fc11f" stroke="#087a08"/><circle cx="5.500" cy="5" r="2" fill="#bff7bf"/></svg></button>
                    <button aria-label="三维视图"><svg viewBox="0 0 16 16"><path d="M6.500 1.500h9l-4 5h-9z" fill="#58dce0" stroke="#222"/><path d="M2.500 6.500h9v8h-9zM11.500 14.500l4-4v-9M2.500 14.500l4-4h9M6.500 10.500v-9" fill="none" stroke="#222"/></svg></button>
                    <button class="smooth" aria-label="轴测视图"><svg viewBox="0 0 16 16"><path d="M8 1l5 6-5 8-5-8z" fill="#fff" stroke="#222"/><path d="M8 8l3-4 2 3-5 8z" fill="#2fd3e0" stroke="#222" stroke-width=".7"/><path d="M3 7l5 3 5-3M8 10v5" fill="none" stroke="#222" stroke-width=".7"/></svg></button>
                </div>

                <!-- Command line -->
                <div class="command">
                    <i class="command-grip"></i>
                    <div class="command-lines">
                        <div class="history">选择对象<span>:</span></div>
                        <label class="prompt">命令<span>:</span><input type="text"></label>
                    </div>
                </div>
            </main>

            <!-- Tool palette -->
            <aside class="palette">
                <div class="palette-bar">
                    <button aria-label="关闭"><svg viewBox="0 0 12 12"><path d="M1 1l9 9M10 1l-9 9" stroke="#000" stroke-width="2"/></svg></button>
                    <button aria-label="自动隐藏"><svg viewBox="0 0 12 12"><path d="M1 0v12M6.500 1v10" stroke="#000"/><path d="M2 6l4-3.500v7zM12 6L8 2.500v7z" fill="#000"/></svg></button>
                    <button aria-label="特性"><svg viewBox="0 0 12 12"><path d="M0 0h12v11H0z" fill="#000"/><path d="M4 3h7v7H4z" fill="#ccc"/><path d="M5 4h5v5H5z" fill="#000"/><path d="M6 5.500h4M6 7.500h4" stroke="#ccc"/></svg></button>
                    <span class="palette-title">天正给排水</span>
                    <svg class="palette-logo" viewBox="0 0 16 16"><path d="M0 0h16v16H0z" fill="#1768c4"/><path d="M0 0h16v5H0z" fill="#3c92e8"/><path d="M1 11.500h15M12.500 7v9M10.500 9.500h4v4h-4z" fill="none" stroke="#fff"/><path d="M4 8h5" stroke="#0a3f86" stroke-width="2"/></svg>
                </div>
                <div class="palette-body">
                    <div class="menu">
                        <button><i class="arrow"></i>设　　置</button>
                        <button><i class="arrow"></i>建　　筑</button>
                        <button><i class="arrow"></i>管　　线</button>
                        <button><i class="arrow"></i>平　　面</button>
                        <button><i class="arrow"></i>平面消防</button>
                        <button><i class="arrow"></i>系　　统</button>
                        <button><i class="arrow"></i>水 泵 间</button>
                        <button><i class="arrow"></i>计　　算</button>
                    </div>
                    <div class="menu open"><button><i class="arrow down"></i>专业标注</button></div>
                    <div class="commands">
                        <div class="command-set">
                            <button><svg viewBox="0 0 16 16"><use href="#jl"/><circle cx="3" cy="12.500" r="2" fill="none" stroke="#0c0"/><path d="M4 11l3-4" stroke="#0c0"/></svg>标注立管</button>
                            <button><svg viewBox="0 0 16 16"><use href="#jl"/><path d="M1.500 1v12M0 11l1.500 3L3 11" fill="none" stroke="#000"/><path d="M4 11l3-3.500h9" fill="none" stroke="#0c0"/></svg>立管排序</button>
                            <button><svg viewBox="0 0 16 16"><circle cx="8" cy="8" r="7" fill="#fff" stroke="#333"/><path d="M1 8.500h14M8.500 2v5M7 3.500h2M6.500 10.500h3v1l-3 2h3.500" fill="none" stroke="#222"/></svg>入户管号</button>
                            <button><svg viewBox="0 0 16 16"><circle cx="4.500" cy="5" r="4" fill="#eee" stroke="#666"/><path d="M0 5.500h9M3 3.500h3M3 7.500h3" stroke="#555"/><path d="M12.500 2v12M11 11l1.500 3 1.500-3" fill="none" stroke="#000"/></svg>入户排序</button>
                            <button><svg viewBox="0 0 16 16"><circle cx="8" cy="8" r="7" fill="#fff" stroke="#111"/><path d="M3 4.500h3v5l-1 3M3 7.500h3M10.500 3L7 6.500M10.500 3l3 3.500M8 7.500h5M8 9l1 2M11 9v2M13 9l-1 3M7 12.500h6" fill="none" stroke="#111"/></svg>标注洁具</button>
                            <button><svg viewBox="0 0 16 16"><use href="#h-line"/></svg>管线文字</button>
                        </div>
                        <div class="command-set">
                            <button><svg viewBox="0 0 16 16"><use href="#dn-pair"/></svg>多管管径</button>
                            <button><svg viewBox="0 0 16 16"><path d="M2 2v7M1 3h4l1 1v3L5 8H1M10 10V2l4 6V2" fill="none" stroke="#000" stroke-width="2"/><path d="M0 13h16" stroke="red" stroke-width="2"/></svg>单管管径</button>
                            <button><svg viewBox="0 0 16 16"><path d="M0 10.500h16M0 14.500h16" stroke="red"/><path d="M4.500 15V2.500H14M5 6.500h9M5 8.500h9" fill="none" stroke="#222"/><path d="M7 4.500h6" stroke="#a33"/></svg>多管标注</button>
                            <button><svg viewBox="0 0 16 16"><path d="M0 14h16" stroke="red" stroke-width="2"/><path d="M8.500 0v6M8.500.5h2l1 2v1l-1 2h-2M13.500 0v6M15.500 0v6M13 3h3" fill="none" stroke="#0a7a1a"/><path d="M1.500 7v5M1.500 7.500h2l1 2v1l-1 1h-2M6.500 7v5M9.500 7v5M7 9.500h3M11 10l4-4" fill="none" stroke="#111"/></svg>标注复位</button>
                            <button><svg viewBox="0 0 16 16"><use href="#dn-erase"/></svg>删除标注</button>
                        </div>
                        <div class="command-set">
                            <button><svg viewBox="0 0 16 16"><use href="#level"/></svg>单注标高</button>
                            <button><svg viewBox="0 0 16 16"><path d="M3 1.500h10M5 1.500l3 4 3-4M3 14.500h10M5 11.500l3 3 3-3M6 11.500h5" fill="none" stroke="#222"/><path d="M8.500 6v5" stroke="#0c0" stroke-dasharray="2 1"/></svg>连注标高</button>
                            <button><svg viewBox="0 0 16 16"><path d="M1 13l5-6.500h10M8 9.500h8" fill="none" stroke="#222"/><circle cx="1.500" cy="13" r="1.500" fill="#b11"/><path d="M5 1l4 5M9 1L5 6M5 7l2 3 2-3M7 10v3" fill="none" stroke="#e0e"/></svg>注坐标点</button>
                            <button><svg viewBox="0 0 16 16"><path d="M0 13.500h13.500v-8H5" fill="none" stroke="#111"/><path d="M3 5.500l4-3v6z" fill="#111"/></svg>箭头引注</button>
                            <button><svg viewBox="0 0 16 16"><path d="M1 14l7-7.500h8" fill="none" stroke="#111"/><circle cx="2" cy="13" r="1.500" fill="#111"/><path d="M9 3.500h6M9 9.500h6M11 1.500h4" stroke="#a22"/></svg>引出标注</button>
                            <button><svg viewBox="0 0 16 16"><path d="M4.500 15V2.500H13M5 6.500h9M5 10.500h9M5 13.500h9" fill="none" stroke="#222"/><path d="M7 4.500h5M7 8.500h5" stroke="#a33"/></svg>多线引出</button>
                            <button class="smooth"><svg viewBox="0 0 16 16"><circle cx="8" cy="8" r="7" fill="#fff" stroke="#000"/><path d="M8 1l3.500 12L8 11l-3.500 2z" fill="#000"/></svg>画指北针</button>
                            <button><svg viewBox="0 0 16 16"><path d="M0 14l7-4-1-2h5L9 6l7-5" fill="none" stroke="#111"/></svg>加折断线</button>
                            <button class="abc"><span>ABC</span>图名标注</button>
                        </div>
                    </div>
                    <div class="menu bottom">
                        <button><i class="arrow"></i>尺寸标注</button>
                        <button><i class="arrow"></i>文字表格</button>
                        <button><i class="arrow"></i>图库图层</button>
                        <button><i class="arrow"></i>绘图工具</button>
                        <button><i class="arrow"></i>文件布图</button>
                        <button><i class="arrow"></i>帮　　助</button>
                    </div>
                </div>
            </aside>
        </div>

        <!-- Status bar -->
        <footer class="status">
            <button class="ratio">比例 1:100<i class="caret"></i></button>
            <output class="coords">59359, 11371, 0</output>
            <div class="modes">
                <button>捕捉</button>
                <button>栅格</button>
                <button>正交</button>
                <button class="on">极轴</button>
                <button class="on">对象捕捉</button>
                <button class="on">对象追踪</button>
                <button class="latin">DUCS</button>
                <button class="latin on">DYN</button>
                <button>线宽</button>
                <button class="latin">QP</button>
            </div>
            <div class="tray">
                <div class="tray-set">
                    <button class="on" aria-label="模型"><svg viewBox="0 0 16 16"><path d="M0 1h16v14H0z" fill="#222"/><path d="M4.500 15V5.500H16M8.500 15V9.500H15M8 12.500h4" fill="none" stroke="#ddd"/></svg></button>
                    <button aria-label="布局"><svg viewBox="0 0 16 16"><path d="M1.500 2.500h13v11h-13z" fill="#eee" stroke="#222"/><path d="M4 4v8h8zM7 4h5v5M5 8h7M9 4v8" fill="none" stroke="#333"/></svg></button>
                    <button aria-label="快速查看布局"><svg viewBox="0 0 16 16"><path d="M2.500 1.500h11v10h-11z" fill="#eee" stroke="#333"/><path d="M5 4v6h6z" fill="none" stroke="#333"/><path d="M1 14h14" stroke="#222" stroke-width="2"/></svg></button>
                    <button aria-label="快速查看图形"><svg viewBox="0 0 16 16"><path d="M.5 2.500h7v6h-7zM8.500 2.500h7v6h-7z" fill="#eee" stroke="#222"/><path d="M0 12h16" stroke="#222" stroke-width="3"/></svg></button>
                </div>
                <div class="tray-set">
                    <button aria-label="平移"><svg viewBox="0 0 16 16"><path d="M1 5l4 3-1-4 4 3 4 1v4l-3 3H6z" fill="#f2f2f2" stroke="#333"/><path d="M12.500 0v7M9 3.500h7" stroke="#111"/></svg></button>
                    <button aria-label="缩放"><svg viewBox="0 0 16 16"><circle cx="6" cy="6" r="4.500" fill="#dff2f8" stroke="#333" stroke-width="1.500"/><path d="M9 9l6 6" stroke="#333" stroke-width="2.500"/></svg></button>
                    <button aria-label="控制盘"><svg viewBox="0 0 16 16"><circle cx="8" cy="8" r="7" fill="#eee" stroke="#444"/><circle cx="8" cy="8" r="3" fill="#fff" stroke="#444"/><path d="M3 3l3 3M13 3l-3 3M3 13l3-3M13 13l-3-3" stroke="#444"/></svg></button>
                    <button aria-label="运动"><svg viewBox="0 0 16 16"><path d="M.5 1.500h4v3h-4zM6 1.500h4v3H6zM11.500 1.500h4v3h-4zM2.500 6.500h11v8h-11z" fill="#eee" stroke="#333"/><path d="M6 8l5 3-5 3z" fill="#333"/></svg></button>
                </div>
                <div class="tray-set">
                    <button class="scale"><svg viewBox="0 0 16 16"><path d="M8 1l2 7 5 4v3L8 10l-7 5v-3l5-4z" fill="#eee" stroke="#222"/></svg>1:1<i class="caret"></i></button>
                    <button aria-label="注释可见性"><svg viewBox="0 0 16 16"><path d="M7 1l2 7 4 3v3l-6-4-6 4v-3l4-3z" fill="#eee" stroke="#222"/><circle cx="12" cy="9" r="3" fill="#ffb030" stroke="#e07a00"/><path d="M12 12v4" stroke="#666" stroke-width="2"/></svg></button>
                    <button aria-label="自动缩放"><svg viewBox="0 0 16 16"><path d="M7 1l2 7 4 4v2l-6-4-6 4v-2l4-4zM11 2l1 5 3 4" fill="#c4c4c4" stroke="#888"/></svg></button>
                </div>
                <div class="tray-set">
                    <button aria-label="工作空间"><svg viewBox="0 0 16 16"><circle cx="8" cy="8" r="6.500" fill="none" stroke="#333" stroke-width="2" stroke-dasharray="3 2"/><circle cx="8" cy="8" r="5.500" fill="#eee" stroke="#333"/><circle cx="8" cy="8" r="2.500" fill="#bbb" stroke="#333"/><path d="M16 11v5h-5z" fill="#111"/></svg></button>
                    <button aria-label="锁定"><svg viewBox="0 0 16 16"><path d="M1.500 7.500h9v7h-9z" fill="#eee" stroke="#222"/><path d="M9 7V3c0-3 6-3 6 0v3M6 9v4" fill="none" stroke="#222" stroke-width="1.500"/></svg></button>
                </div>
                <div class="tray-set tray-end">
                    <button class="pressed" aria-label="图形状态"><svg viewBox="0 0 16 16"><path d="M2.500 1.500h9l2 3v9h-11z" fill="#f4f8fa" stroke="#357"/><path d="M3 5h9M3 9h9M6 2v11" stroke="#58a"/><path d="M6 10l4 4 6-7" fill="none" stroke="#1fb01f" stroke-width="2.500"/></svg></button>
                    <button class="narrow" aria-label="状态栏菜单"><i class="caret"></i></button>
                    <button aria-label="全屏显示"><svg viewBox="0 0 16 16"><path d="M1.500 1.500h13v12h-13z" fill="#f4f4f4" stroke="#333"/><path d="M1 3h14" stroke="#333" stroke-width="2"/></svg></button>
                    <svg class="resize" viewBox="0 0 12 12"><path d="M9 1h2v2H9zM9 5h2v2H9zM5 5h2v2H5zM9 9h2v2H9zM5 9h2v2H5zM1 9h2v2H1z" fill="#ddd"/></svg>
                </div>
            </div>
        </footer>
    </div>
</body>
</html>
```

FILE: styles.css
```css
* {
    box-sizing: border-box;
}

body {
    margin: 0;
    background: #666;
    color: #111;
    font-family: "Liberation Sans", "Noto Sans CJK SC", sans-serif;
    font-size: 12px;
    line-height: 14px;
}

button,
select,
input {
    margin: 0;
    padding: 0;
    border: 0;
    border-radius: 0;
    background: none;
    color: inherit;
    font: inherit;
}

svg {
    display: block;
    flex: none;
}

.symbols {
    position: absolute;
    width: 0;
    height: 0;
}

.app {
    display: flex;
    flex-direction: column;
    height: 100vh;
    overflow: hidden;
}

.workspace {
    display: flex;
    flex: 1;
    min-height: 0;
}

.main {
    display: flex;
    flex-direction: column;
    flex: 1;
    min-width: 0;
}

.caret {
    flex: none;
    border: 4px solid transparent;
    border-top: 5px solid #111;
    border-bottom: 0;
}

/* Ribbon */
.ribbon {
    display: flex;
    gap: 2px;
    padding: 2px 0 5px 6px;
    background: #646464;
    overflow: hidden;
}

.panel {
    display: flex;
    flex-direction: column;
    flex: none;
    height: 90px;
    border-radius: 3px 3px 0 0;
    background: #efefef;
    overflow: hidden;
}

.panel-last {
    flex: 1;
    min-width: 0;
}

.panel-body {
    display: flex;
    flex: 1;
    gap: 4px;
    padding: 9px 3px 0 5px;
}

.panel-last .panel-body {
    padding: 9px 0 0 3px;
}

.panel-title {
    display: flex;
    align-items: center;
    justify-content: center;
    position: relative;
    height: 16px;
    margin: 0;
    border-top: 1px solid #aaa;
    background: linear-gradient(#fafafa, #bcbcbc);
    color: #444;
    font-size: 11px;
    font-weight: 500;
}

.corner {
    position: absolute;
    right: 4px;
    bottom: 4px;
    border: 3px solid #444;
    border-top-color: transparent;
    border-left-color: transparent;
}

.big {
    display: flex;
    flex-direction: column;
    align-items: center;
    width: 36px;
    height: 60px;
    color: #333;
    font-size: 11px;
    line-height: 13px;
}

.icon32 {
    width: 32px;
    height: 32px;
    margin: 2px 0 4px;
}

.tall {
    height: 63px;
    margin-top: -4px;
}

.tall .icon32 {
    margin: 0 0 3px;
}

.icon24 {
    width: 24px;
    height: 24px;
    margin: 1px 0 15px;
}

.zoom-big {
    align-items: flex-start;
    white-space: nowrap;
}

.rows {
    display: flex;
    flex-direction: column;
    gap: 5px;
}

.row {
    display: flex;
    align-items: center;
    gap: 5px;
    height: 22px;
}

.group {
    display: flex;
    height: 22px;
    border-radius: 2px;
    box-shadow: inset 0 0 0 1px #d6d6d6;
}

.tool {
    display: flex;
    align-items: center;
    justify-content: center;
    width: 21px;
}

.tool + .tool {
    border-left: 1px solid #d9d9d9;
}

.tool svg,
.text-tool svg,
.combo svg,
.label-icon {
    width: 16px;
    height: 16px;
}

.split {
    width: 37px;
    gap: 4px;
}

.text-tool {
    display: flex;
    align-items: center;
    gap: 4px;
    width: 50px;
    color: #333;
    font-size: 11px;
}

.combo {
    display: flex;
    align-items: center;
    height: 21px;
    border: 2px solid #555;
    border-right: 1px solid #bbb;
    border-bottom: 1px solid #bbb;
    background: #fff;
    font-size: 11px;
}

.combo select {
    flex: 1;
    min-width: 0;
    padding-left: 3px;
    appearance: none;
    color: #000;
    outline: none;
    opacity: 1;
}

.drop {
    display: flex;
    align-items: center;
    justify-content: center;
    flex: none;
    width: 15px;
    height: 18px;
    border: 1px solid #fff;
    border-right-color: #555;
    border-bottom-color: #555;
    background: #d4d0c8;
    pointer-events: none;
}

.drop::after {
    content: "";
    border: 4px solid transparent;
    border-top: 4px solid #000;
    border-bottom: 0;
}

.swatch {
    flex: none;
    width: 11px;
    height: 11px;
    border: 1px solid #222;
    background: #00f000;
}

.stroke {
    flex: none;
    height: 1px;
    margin-left: 3px;
    background: #000;
}

.combo-state {
    width: 116px;
    font-weight: 700;
}

.combo-layer {
    width: 163px;
    padding-left: 2px;
}

.combo-layer svg {
    margin-right: 1px;
}

.combo-layer select {
    font-size: 12px;
}

.combo-color,
.combo-weight,
.combo-plot {
    font-family: "Noto Sans", sans-serif;
}

.combo-color {
    width: 92px;
    margin-left: -3px;
}

.combo-color .swatch {
    margin-left: 4px;
}

.combo-weight {
    width: 91px;
}

.combo-weight .stroke {
    width: 34px;
    height: 2px;
}

.combo-type {
    width: 79px;
    margin-left: -3px;
}

.combo-type .stroke {
    width: 48px;
    margin-left: 8px;
}

.combo-plot {
    flex: 1;
}

.disabled {
    background: #d4d0c8;
}

.disabled select {
    color: #888;
}

.disabled .drop::after {
    border-top-color: #999;
}

/* Drawing */
.drawing {
    position: relative;
    flex: 1;
    min-height: 0;
    margin-left: 3px;
    border: 1px solid #333;
    border-width: 1px 0 1px 1px;
    border-bottom-color: #bbb;
    background: #fff;
}

.canvas {
    width: 100%;
    height: 100%;
}

.pipe {
    fill: none;
    stroke-width: 1px;
}

.water {
    stroke: #0f0;
}

.cool {
    stroke: #0ff;
}

.waste {
    stroke: #ff0;
}

.ink {
    fill: none;
    stroke: #000;
}

.note {
    font-family: "Noto Sans CJK SC", sans-serif;
    font-size: 12px;
}

.size,
.tag,
.waste-tag {
    font-family: Roboto, "Liberation Sans", sans-serif;
    font-size: 13px;
    font-weight: 300;
}

.tag {
    font-size: 18px;
}

.waste-tag {
    font-size: 15px;
}

.green {
    fill: #0e0;
}

.brand {
    position: absolute;
    top: 6px;
    right: 3px;
    display: flex;
    gap: 2px;
    color: red;
}

.brand svg {
    width: 22px;
    height: 22px;
}

.brand strong,
.brand a {
    display: block;
    color: red;
    font-size: 13px;
    font-weight: 700;
    line-height: 14px;
    text-decoration: none;
}

.brand a {
    font-size: 10px;
    line-height: 10px;
}

/* Drafting toolbar */
.toolbar {
    display: flex;
    align-items: center;
    align-self: flex-start;
    height: 24px;
    margin: 5px 0 7px 5px;
    padding: 0 0 0 1px;
    border: 1px solid #333;
    background: #eee;
}

.toolbar button {
    display: flex;
    align-items: center;
    justify-content: center;
    flex: none;
    width: 23px;
    height: 22px;
}

.toolbar svg {
    width: 16px;
    height: 16px;
    shape-rendering: crispEdges;
}

.grip {
    width: 4px;
    height: 18px;
    background: repeating-linear-gradient(#777 0 1px, #eee 1px 3px);
}

.divider {
    width: 1px;
    height: 18px;
    margin: 0 2px;
    background: #999;
}

.toolbar .word {
    color: #22e;
    font-size: 11px;
    font-weight: 700;
}

.toolbar .scale-tool {
    flex-direction: column;
    font-size: 7px;
    line-height: 7px;
}

.toolbar .scale-tool svg {
    height: 9px;
}

.toolbar .smooth svg,
.palette .smooth svg {
    shape-rendering: auto;
}

/* Command line */
.command {
    display: flex;
    flex: none;
    height: 38px;
    margin-left: 2px;
    background: #a5a5a5;
}

.command-grip {
    width: 12px;
    height: 5px;
    margin: 2px 1px 0 2px;
    background: repeating-linear-gradient(90deg, #444 0 1px, #a5a5a5 1px 2px);
}

.command-lines {
    flex: 1;
    border-radius: 3px;
    background: #fff;
    font-family: "Noto Sans CJK SC", sans-serif;
    font-size: 15px;
    line-height: 17px;
}

.history {
    height: 20px;
    padding-left: 3px;
    line-height: 15px;
    border-bottom: 1px solid #777;
}

.prompt {
    display: flex;
    height: 18px;
    padding-left: 3px;
}

.command-lines span {
    font-family: "Liberation Mono", monospace;
    font-weight: 700;
}

.prompt input {
    flex: 1;
    outline: none;
}

/* Palette */
.palette {
    display: flex;
    flex: none;
    width: 109px;
    margin-top: 3px;
    border: 1px solid #555;
    border-right: 0;
    border-radius: 4px 0 0 4px;
    background: #c9c9c9;
}

.palette-bar {
    display: flex;
    flex-direction: column;
    align-items: center;
    gap: 6px;
    width: 20px;
    padding: 5px 0 3px;
}

.palette-bar button,
.palette-bar button svg {
    width: 12px;
    height: 12px;
}

.palette-title {
    margin: auto 0 4px;
    writing-mode: vertical-rl;
    text-orientation: sideways;
    transform: rotate(180deg);
    font-size: 12px;
    font-weight: 700;
}

.palette-logo {
    width: 16px;
    height: 16px;
}

.palette-body {
    display: flex;
    flex-direction: column;
    flex: 1;
    margin: 2px 0 3px;
    border: 1px solid #777;
    border-right: 0;
    border-radius: 4px 0 0 4px;
    background: #d4d0c8;
    overflow: hidden;
}

.palette-body button {
    display: flex;
    align-items: center;
    gap: 5px;
    width: 100%;
    height: 18px;
    padding-left: 4px;
    color: #000;
    white-space: pre;
    text-align: left;
}

.palette-body svg {
    width: 16px;
    height: 16px;
    shape-rendering: crispEdges;
}

.menu {
    padding: 3px 0 4px;
}

.open {
    padding: 1px 0;
    border-top: 1px solid #888;
    border-bottom: 1px solid #777;
}

.arrow {
    flex: none;
    width: 16px;
    height: 10px;
    background: #2a66ae;
    clip-path: polygon(30% 0, 62% 50%, 30% 100%);
}

.down {
    clip-path: polygon(20% 30%, 80% 30%, 50% 80%);
}

.bottom {
    padding: 2px 0 5px;
}

.commands {
    flex: 1;
    background: #efeeea;
    border-left: 1px solid #d4d0c8;
}

.commands button {
    padding-left: 3px;
}

.command-set {
    padding: 2px 0 3px;
    border-bottom: 1px solid #888;
}

.command-set:last-child {
    border-bottom: 0;
}

.abc span {
    width: 16px;
    border-bottom: 3px double #188;
    font-size: 8px;
    line-height: 9px;
}

/* Status bar */
.status {
    display: flex;
    flex: none;
    height: 25px;
    border-top: 1px solid #333;
    background: linear-gradient(#8c8c8c, #757575);
    padding: 0 2px 3px 6px;
}

.status button {
    display: flex;
    align-items: center;
    justify-content: center;
    flex: none;
    background: linear-gradient(#bcbcbc, #9a9a9a);
    border-right: 1px solid #555;
}

.status .ratio {
    gap: 6px;
    width: 82px;
    border: 0;
}

.coords {
    width: 133px;
    padding-left: 7px;
    line-height: 25px;
}

.modes,
.tray,
.tray-set {
    display: flex;
}

.modes button {
    padding: 0 2px 0 3px;
}

.modes .latin {
    padding: 0 2px;
    font-family: "Liberation Mono", monospace;
    font-size: 10px;
}

.status .on {
    background: linear-gradient(#d6ebf3, #a3c9d8);
}

.tray {
    flex: 1;
    justify-content: flex-end;
    gap: 8px;
}

.tray-set + .tray-set {
    margin-left: 8px;
}

.tray-set:nth-child(3) {
    margin-left: 14px;
}

.tray-set:nth-child(n+4) {
    margin-left: -2px;
}

.tray-set button {
    width: 22px;
}

.tray-set svg {
    width: 16px;
    height: 16px;
}

.tray-set .scale {
    gap: 2px;
    width: 52px;
}

.tray-set .pressed {
    width: 28px;
    border: 1px solid #444;
    background: #9a9a9a;
}

.tray-set .narrow {
    width: 14px;
    background: none;
    border: 0;
}

.tray-end {
    align-items: stretch;
}

.tray-set .resize {
    width: 12px;
    height: 12px;
    margin-left: 4px;
    align-self: flex-end;
}
```
